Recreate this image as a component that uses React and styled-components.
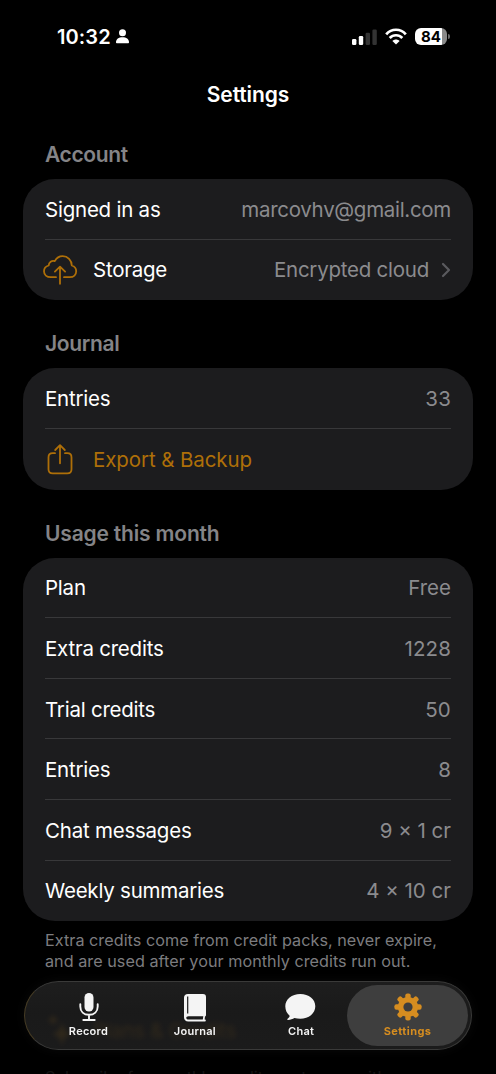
import React from 'react';
import styled, { createGlobalStyle, css } from 'styled-components';

/* Color palette */
const COLORS = {
  black: '#000000',
  white: '#FFFFFF',
  card: '#1C1C1E',
  divider: '#38383A',
  label: '#FFFFFF',
  value: '#8B8B8E',
  header: '#848487',
  footer: '#7C7C7F',
  accent: '#AE6F08',
  accentBright: '#D68D20',
  chevron: '#5A5A5E',
  tab: '#F4F4F4',
  tabActive: '#3E3E3E',
};

const GlobalStyle = createGlobalStyle`
  * { box-sizing: border-box; }
  html, body { margin: 0; padding: 0; background: ${COLORS.black}; }
  body { overflow: hidden; }
`;

/* ---------- Screen ---------- */
const Screen = styled.div`
  position: relative;
  width: 496px;
  height: 1074px;
  overflow: hidden;
  background: ${COLORS.black};
  color: ${COLORS.label};
  font-family: Inter, 'Liberation Sans', sans-serif;
`;

const StatusBar = styled.div`
  height: 73px;
  padding: 0 46px 0 57px;
  display: flex;
  align-items: center;
  justify-content: space-between;
`;

const StatusGroup = styled.div`
  display: flex;
  align-items: center;
  gap: ${p => p.$gap}px;
`;

const Clock = styled.span`
  font-size: 20px;
  font-weight: 600;
  letter-spacing: 0.1px;
`;

const Battery = styled.div`
  position: relative;
  width: 32px;
  height: 17px;
  border-radius: 6px;
  margin-right: 3px;
  background: linear-gradient(90deg, ${COLORS.white} 84%, #8a8a8a 84%);
  color: ${COLORS.black};
  font-size: 15px;
  font-weight: 700;
  line-height: 17px;
  text-align: center;

  &::after {
    content: '';
    position: absolute;
    right: -3px;
    top: 6px;
    width: 2px;
    height: 5px;
    border-radius: 0 2px 2px 0;
    background: #6a6a6a;
  }
`;

const Title = styled.h1`
  margin: 0;
  height: 44px;
  line-height: 44px;
  text-align: center;
  font-size: 21px;
  font-weight: 600;
  letter-spacing: -0.1px;
`;

/* ---------- Grouped list ---------- */
const Section = styled.section`
  padding: 0 23px;
`;

const SectionTitle = styled.h2`
  margin: 0;
  height: ${p => p.$height}px;
  padding: 0 22px 11px;
  display: flex;
  align-items: flex-end;
  color: ${COLORS.header};
  font-size: 21px;
  font-weight: 600;
  line-height: 26px;
  letter-spacing: ${p => p.$track || 0}px;
`;

const Card = styled.div`
  padding: 0 22px;
  border-radius: 32px;
  background: ${COLORS.card};
`;

const Row = styled.div`
  height: 60.6px;
  display: flex;
  align-items: center;
  border-bottom: 1px solid ${COLORS.divider};

  &:last-child { border-bottom-color: transparent; }
`;

const RowIcon = styled.span`
  width: 48px;
  height: 34px;
  margin-top: 1px;
  margin-left: -3px;
  margin-right: 3px;
  display: flex;
  color: ${COLORS.accent};
`;

const Label = styled.span`
  padding-top: 2px;
  font-size: 20.5px;
  line-height: 26px;
  letter-spacing: ${p => p.$track ?? -0.23}px;
  color: ${p => (p.$accent ? COLORS.accent : COLORS.label)};
`;

const Value = styled.span`
  margin-left: auto;
  padding-top: 2px;
  font-size: 20.5px;
  line-height: 26px;
  letter-spacing: ${p => p.$track || 0}px;
  color: ${COLORS.value};
`;

const Footnote = styled.p`
  margin: 0;
  padding: 9px 22px 0;
  color: ${COLORS.footer};
  font-size: 16.2px;
  line-height: 20.4px;
  letter-spacing: 0.03px;
  white-space: pre;
`;

/* Next section, mostly hidden behind the tab bar */
const PlansRow = styled.div`
  height: 56px;
  margin-top: 31px;
  padding: 0 22px;
  display: flex;
  align-items: center;
`;

/* ---------- Tab bar ---------- */
const BottomFade = styled.div`
  position: absolute;
  left: 0;
  right: 0;
  bottom: 0;
  height: 100px;
  background: linear-gradient(180deg, rgba(0,0,0,0) 0%, rgba(0,0,0,0.45) 60%, rgba(0,0,0,0.84) 94%);
`;

const TabBar = styled.nav`
  position: absolute;
  left: 24px;
  bottom: 24px;
  width: 448px;
  height: 69px;
  padding: 3px;
  display: flex;
  border: 1px solid #3a3a39;
  border-left-color: #463c25;
  border-radius: 35px;
  background: linear-gradient(180deg, rgba(38,38,38,0.78), rgba(33,33,33,0.78) 45%, rgba(35,35,35,0.78));
  backdrop-filter: blur(2.5px);
  box-shadow: 0 0 12px rgba(16,16,16,0.6);
`;

const Tab = styled.a`
  width: 121px;
  flex: none;
  height: 61px;
  padding-top: 7px;
  display: flex;
  flex-direction: column;
  align-items: center;
  border-radius: 31px;
  color: ${COLORS.tab};
  font-size: 11px;
  font-weight: 600;
  line-height: 14px;
  letter-spacing: 0.28px;

  & + & { margin-left: -14.67px; }

  svg { display: block; margin-bottom: 2px; }

  ${p => p.$active && css`
    color: ${COLORS.accentBright};
    background: ${COLORS.tabActive};
    font-weight: 700;
    letter-spacing: 0.4px;
  `}
`;

/* ---------- Icons ---------- */
const PersonIcon = () => (
  <svg width="14" height="15" viewBox="0 0 14 15" fill="currentColor" aria-hidden>
    <circle cx="6.500" cy="3.800" r="3.500" />
    <path d="M0 13.200C0 10.300 2.700 8.300 6.500 8.300s6.500 2 6.500 4.900c0 .7-.4 1-1.100 1H1.100c-.7 0-1.100-.3-1.100-1z" />
  </svg>
);

const SignalIcon = () => (
  <svg width="25" height="16" viewBox="0 0 25 16" fill={COLORS.white} aria-hidden>
    <rect x="0" y="10" width="4.4" height="6" rx="1.3" />
    <rect x="6.8" y="7" width="4.4" height="9" rx="1.3" />
    <rect x="13.6" y="3.8" width="4.4" height="12.2" rx="1.3" fill="#333333" />
    <rect x="20.4" y="0.5" width="4.4" height="15.5" rx="1.3" fill="#333333" />
  </svg>
);

const WifiIcon = () => (
  <svg width="22" height="17" viewBox="0 0 22 17" fill="none" stroke="currentColor" strokeWidth="2.7" aria-hidden>
    <path d="M1.2 6.300C6.500.2 15.500.2 20.800 6.300" />
    <path d="M4.700 10c3.500-3.700 9.100-3.700 12.600 0" />
    <path d="M7.400 12.900c2-2 5.200-2 7.200 0L11 16.600z" fill="currentColor" stroke="none" />
  </svg>
);

const CloudUploadIcon = () => (
  <svg width="36" height="34" viewBox="0 0 36 34" fill="none" stroke="currentColor" strokeWidth="1.8" strokeLinecap="round" strokeLinejoin="round" aria-hidden>
    <path d="M14 24.200H8.800C4.800 24.200 2 21.700 2 18.300c0-3 1.900-5.100 4.700-5.800.1-3.200 3-5.300 6.100-4.300C14.300 5.400 17 3.200 20.600 3.200c5.200 0 9 3.900 9.200 9.300 2.700.8 4.400 3 4.400 5.800 0 3.400-2.600 5.900-6.300 5.900H22" />
    <path d="M18 30.800V14M12.900 18.600L18 13.600l5.100 5" />
  </svg>
);

const ShareIcon = () => (
  <svg width="36" height="34" viewBox="0 0 36 34" fill="none" stroke="currentColor" strokeWidth="1.8" strokeLinecap="round" strokeLinejoin="round" aria-hidden>
    <path d="M13 11.200h-2.300c-2.700 0-4.200 1.500-4.200 4.200v11.800c0 2.700 1.500 4.200 4.200 4.200h14.600c2.700 0 4.200-1.500 4.200-4.200V15.400c0-2.700-1.500-4.200-4.200-4.200H23" />
    <path d="M18 21.300V3.500M13.200 8L18 3.200l4.800 4.800" />
  </svg>
);

const SparklesIcon = () => (
  <svg width="36" height="34" viewBox="0 0 36 34" fill="currentColor" aria-hidden>
    <path d="M20 10l3 8 6 3-6 3-3 9-3-9-7-3 7-3z" />
    <path d="M11 1l1.500 4.500L17 7l-4.500 1.500L11 13l-1.500-4.500L5 7l4.500-1.500z" />
  </svg>
);

const Chevron = styled.svg`
  margin-top: 1px;
  margin-left: 12px;
`;

const ChevronIcon = () => (
  <Chevron width="10" height="16" viewBox="0 0 10 16" fill="none" stroke={COLORS.chevron} strokeWidth="2.2" strokeLinecap="round" strokeLinejoin="round" aria-hidden>
    <path d="M2 2l6 6-6 6" />
  </Chevron>
);

const MicIcon = () => (
  <svg width="30" height="30" viewBox="0 0 30 30" fill="none" stroke="currentColor" strokeWidth="1.900" strokeLinecap="round" aria-hidden>
    <rect x="10.500" y="1" width="9" height="18.500" rx="4.500" fill="currentColor" stroke="none" />
    <path d="M6.300 12.200v2.300c0 5 3.500 8.300 8.700 8.300s8.700-3.300 8.700-8.300v-2.300M15 23v4.500M9.300 28h11.400" />
  </svg>
);

const JournalIcon = () => (
  <svg width="30" height="30" viewBox="0 0 30 30" aria-hidden>
    <path fill="currentColor" fillRule="evenodd" d="M8 2h15c2 0 3 1 3 3v18c0 .8-.3 1.300-1 1.600l-.4 2.900h.4c1.100 0 1.100 2 0 2H8.400c-2.900 0-4.400-1.500-4.400-4.200V5.800C4 3.300 5.400 2 8 2zM8.500 24.200c-3 0-3 3.300 0 3.300h14.300l.5-3.300zM7.100 4.400v17.200h1.200V4.400z" />
  </svg>
);

const ChatIcon = () => (
  <svg width="32" height="30" viewBox="0.700 0 32 30" fill="currentColor" aria-hidden>
    <path d="M16 2C7.500 2 1 7.200 1 14.300c0 4 1.700 7.300 4.300 9.400.2 1-.8 2-2 3-.8.700-.3 1.300.5 1.200 2.400-.2 4.600-1 6.300-2 1.800.5 3.900.8 5.900.8 8.500 0 15-5.200 15-12.400S24.500 2 16 2z" />
  </svg>
);

const GearIcon = () => (
  <svg width="30" height="30" viewBox="-15 -15 30 30" aria-hidden>
    {[0, 45, 90, 135].map(a => (
      <rect key={a} x="-2.700" y="-13.600" width="5.400" height="27.200" rx="2" fill="currentColor" transform={`rotate(${a})`} />
    ))}
    <circle r="10.100" fill="currentColor" />
    <circle r="4.600" fill={COLORS.tabActive} />
  </svg>
);

/* ---------- Data ---------- */
const USAGE = [
  { label: 'Plan', value: 'Free' },
  { label: 'Extra credits', value: '1228', track: 0.1 },
  { label: 'Trial credits', value: '50', track: 0.2 },
  { label: 'Entries', value: '8' },
  { label: 'Chat messages', value: '9 × 1 cr' },
  { label: 'Weekly summaries', value: '4 × 10 cr' },
];

const TABS = [
  { name: 'Record', Icon: MicIcon },
  { name: 'Journal', Icon: JournalIcon },
  { name: 'Chat', Icon: ChatIcon },
  { name: 'Settings', Icon: GearIcon, active: true },
];

const App = () => (
  <Screen>
    <GlobalStyle />
    <StatusBar>
      <StatusGroup $gap={5}>
        <Clock>10:32</Clock>
        <PersonIcon />
      </StatusGroup>
      <StatusGroup $gap={8}>
        <SignalIcon />
        <WifiIcon />
        <Battery>84</Battery>
      </StatusGroup>
    </StatusBar>
    <Title>Settings</Title>

    <Section>
      <SectionTitle $height={62} $track={-0.38}>Account</SectionTitle>
      <Card>
        <Row>
          <Label>Signed in as</Label>
          <Value $track={-0.3}>marcovhv@gmail.com</Value>
        </Row>
        <Row>
          <RowIcon><CloudUploadIcon /></RowIcon>
          <Label>Storage</Label>
          <Value $track={-0.24}>Encrypted cloud</Value>
          <ChevronIcon />
        </Row>
      </Card>
    </Section>

    <Section>
      <SectionTitle $height={68.2} $track={-0.35}>Journal</SectionTitle>
      <Card>
        <Row>
          <Label>Entries</Label>
          <Value $track={0.2}>33</Value>
        </Row>
        <Row>
          <RowIcon><ShareIcon /></RowIcon>
          <Label $accent $track={-0.1}>Export &amp; Backup</Label>
        </Row>
      </Card>
    </Section>

    <Section>
      <SectionTitle $height={68} $track={-0.18}>Usage this month</SectionTitle>
      <Card>
        {USAGE.map(u => (
          <Row key={u.label}>
            <Label>{u.label}</Label>
            <Value $track={u.track}>{u.value}</Value>
          </Row>
        ))}
      </Card>
      <Footnote>{'Extra credits come from credit packs, never expire,\nand are used after your monthly credits run out.'}</Footnote>
    </Section>

    <Section>
      <PlansRow aria-hidden>
        <RowIcon><SparklesIcon /></RowIcon>
        <Label $accent>Plans &amp; Credits</Label>
      </PlansRow>
      <Footnote>Subscribe for monthly credits, or top up with</Footnote>
    </Section>

    <BottomFade />
    <TabBar aria-label="Main">
      {TABS.map(({ name, Icon, active }) => (
        <Tab key={name} $active={active}>
          <Icon />
          {name}
        </Tab>
      ))}
    </TabBar>
  </Screen>
);

export default App;
